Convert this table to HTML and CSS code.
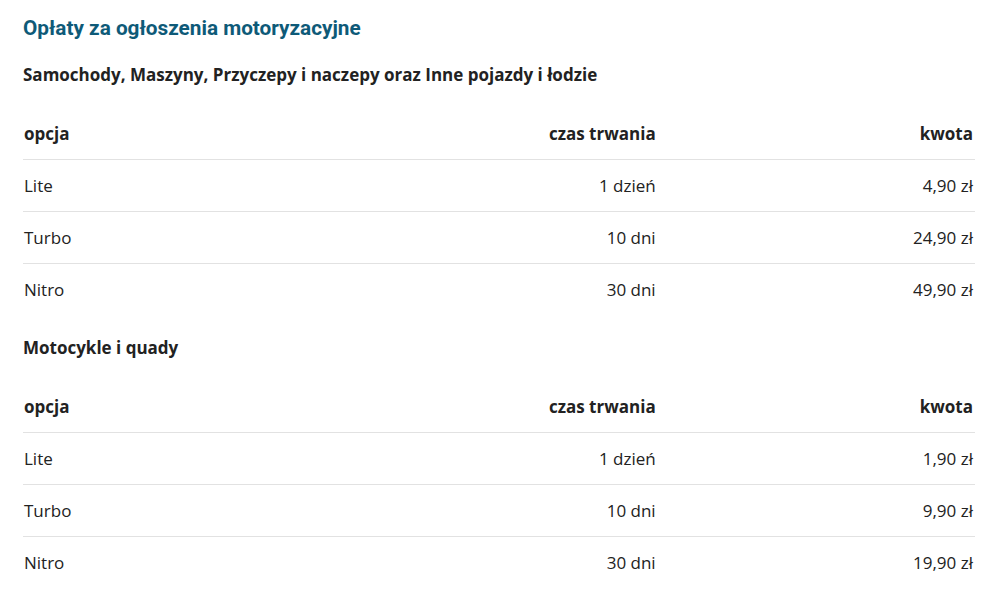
FILE: index.html
```html
<!DOCTYPE html>
<html lang="pl">
<head>
<meta charset="utf-8">
<title>Opłaty za ogłoszenia motoryzacyjne</title>
<link rel="stylesheet" href="styles.css">
</head>
<body>
<main class="page">
  <h1 class="title">Opłaty za ogłoszenia motoryzacyjne</h1>

  <section class="group">
    <h2 class="group-title">Samochody, Maszyny, Przyczepy i naczepy oraz Inne pojazdy i łodzie</h2>
    <table class="fees">
      <thead>
        <tr><th class="c-opt">opcja</th><th class="c-time">czas trwania</th><th class="c-price">kwota</th></tr>
      </thead>
      <tbody>
        <tr><td class="c-opt">Lite</td><td class="c-time">1 dzień</td><td class="c-price">4,90 zł</td></tr>
        <tr><td class="c-opt">Turbo</td><td class="c-time">10 dni</td><td class="c-price">24,90 zł</td></tr>
        <tr><td class="c-opt">Nitro</td><td class="c-time">30 dni</td><td class="c-price">49,90 zł</td></tr>
      </tbody>
    </table>
  </section>

  <section class="group">
    <h2 class="group-title">Motocykle i quady</h2>
    <table class="fees">
      <thead>
        <tr><th class="c-opt">opcja</th><th class="c-time">czas trwania</th><th class="c-price">kwota</th></tr>
      </thead>
      <tbody>
        <tr><td class="c-opt">Lite</td><td class="c-time">1 dzień</td><td class="c-price">1,90 zł</td></tr>
        <tr><td class="c-opt">Turbo</td><td class="c-time">10 dni</td><td class="c-price">9,90 zł</td></tr>
        <tr><td class="c-opt">Nitro</td><td class="c-time">30 dni</td><td class="c-price">19,90 zł</td></tr>
      </tbody>
    </table>
  </section>
</main>
</body>
</html>
```

FILE: styles.css
```css
html, body {
  margin: 0;
  padding: 0;
  background: #ffffff;
}

body {
  font-family: "Open Sans", "Liberation Sans", sans-serif;
  color: #222222;
}

.page {
  padding: 14px 24px 0 23px;
}

.title {
  margin: 0;
  font-family: Roboto, "Liberation Sans", sans-serif;
  font-weight: 700;
  font-size: 20.75px;
  line-height: 28px;
  color: #0e5a78;
}

.group-title {
  margin: 21px 0 0;
  font-size: 17px;
  line-height: 24px;
  font-weight: 700;
  color: #222222;
}

.fees {
  width: 100%;
  margin-top: 21px;
  border-collapse: collapse;
  table-layout: fixed;
  font-size: 17px;
}

.fees th,
.fees td {
  height: 51px;
  padding: 0 2px 0 1px;
  vertical-align: middle;
  line-height: 22px;
}

.fees th {
  font-weight: 700;
}

.fees thead tr,
.fees tbody tr {
  border-bottom: 1px solid #e2e2e2;
}

.fees tbody tr:last-child {
  border-bottom: none;
}

.c-opt {
  text-align: left;
}

.c-time,
.c-price {
  text-align: right;
}
```
